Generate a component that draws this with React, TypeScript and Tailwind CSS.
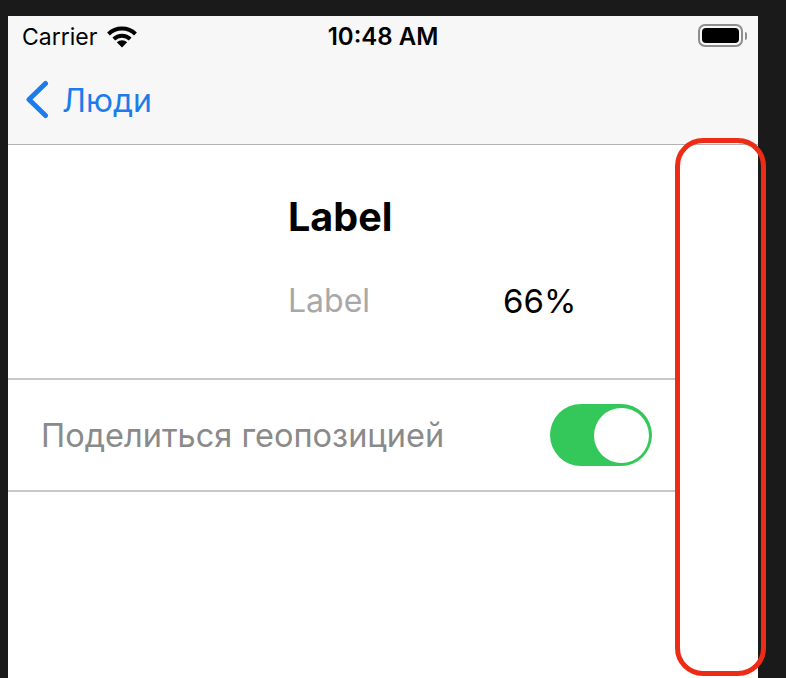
import React from "react";

function Wifi() {
  return (
    <svg width="30" height="22" viewBox="0 0 30 22" fill="none" className="ml-[10px]">
      <path d="M1.5 8 A19.5 19.5 0 0 1 28.5 8" stroke="#000" strokeWidth="4" />
      <path d="M6.8 13 A12 12 0 0 1 23.2 13" stroke="#000" strokeWidth="4" />
      <path d="M9.8 16.2 A7.6 7.6 0 0 1 20.2 16.2 L15 21.5 Z" fill="#000" />
    </svg>
  );
}

function Battery() {
  return (
    <div className="flex items-center mb-[3px]">
      <div className="w-[45px] h-[23px] rounded-[7px] border-2 border-[#8e8e8e] p-[2px]">
        <div className="w-full h-full rounded-[4px] bg-black" />
      </div>
      <div className="ml-[2px] w-[2px] h-[8px] rounded-r-sm bg-[#8e8e8e]" />
    </div>
  );
}

export default function App() {
  return (
    <div className="relative w-[786px] h-[678px] overflow-hidden bg-[#1a1a1a] pt-4 pl-2 font-['Inter',sans-serif]">
      <div className="w-[750px] h-[662px] bg-white flex flex-col">
        <div className="h-[129px] shrink-0 bg-[#f7f7f7] border-b border-[#b2b2b2] flex flex-col">
          <div className="h-[42px] flex items-center justify-between pl-[14px] pr-[11px]">
            <div className="flex items-center w-[200px]">
              <span className="text-[23px] leading-none text-black">Carrier</span>
              <Wifi />
            </div>
            <span className="mr-[3px] text-[24px] leading-none font-semibold text-black">10:48 AM</span>
            <div className="w-[200px] flex justify-end">
              <Battery />
            </div>
          </div>
          <div className="flex items-center pl-[16px] mt-[22px]">
            <svg width="26" height="40" viewBox="0 0 26 40" fill="none">
              <path d="M21.5 3.5 L5 19.5 L21.5 35.5" stroke="#1d7cec" strokeWidth="5" strokeLinecap="round" strokeLinejoin="round" />
            </svg>
            <span className="ml-[12px] mt-[2px] text-[32px] leading-none text-[#1d7cec]">Люди</span>
          </div>
        </div>
        <div className="w-[667px] flex flex-col">
          <div className="h-[235px] border-b-2 border-[#c8c8c8] pl-[280px] pt-[50px] flex flex-col">
            <span className="text-[39.5px] leading-[44px] font-bold text-black">Label</span>
            <div className="mt-[44px] flex items-center">
              <span className="w-[215px] text-[32px] leading-[36px] text-[#a8a8a8]">Label</span>
              <span className="text-[33px] leading-[36px] text-black">66%</span>
            </div>
          </div>
          <div className="h-[112px] border-b-2 border-[#c8c8c8] flex items-center pl-[33px]">
            <span className="w-[509px] mt-[2px] text-[32.5px] leading-none text-[#8a8a8a]">Поделиться геопозицией</span>
            <div className="w-[102px] h-[62px] rounded-full bg-[#34c759] flex items-center justify-end pr-[3px]">
              <div className="w-[55px] h-[55px] rounded-full bg-white" />
            </div>
          </div>
        </div>
      </div>
      <div className="absolute left-[675px] top-[138px] w-[91px] h-[538px] rounded-[28px] border-[5px] border-[#ee2c15]" />
    </div>
  );
}
